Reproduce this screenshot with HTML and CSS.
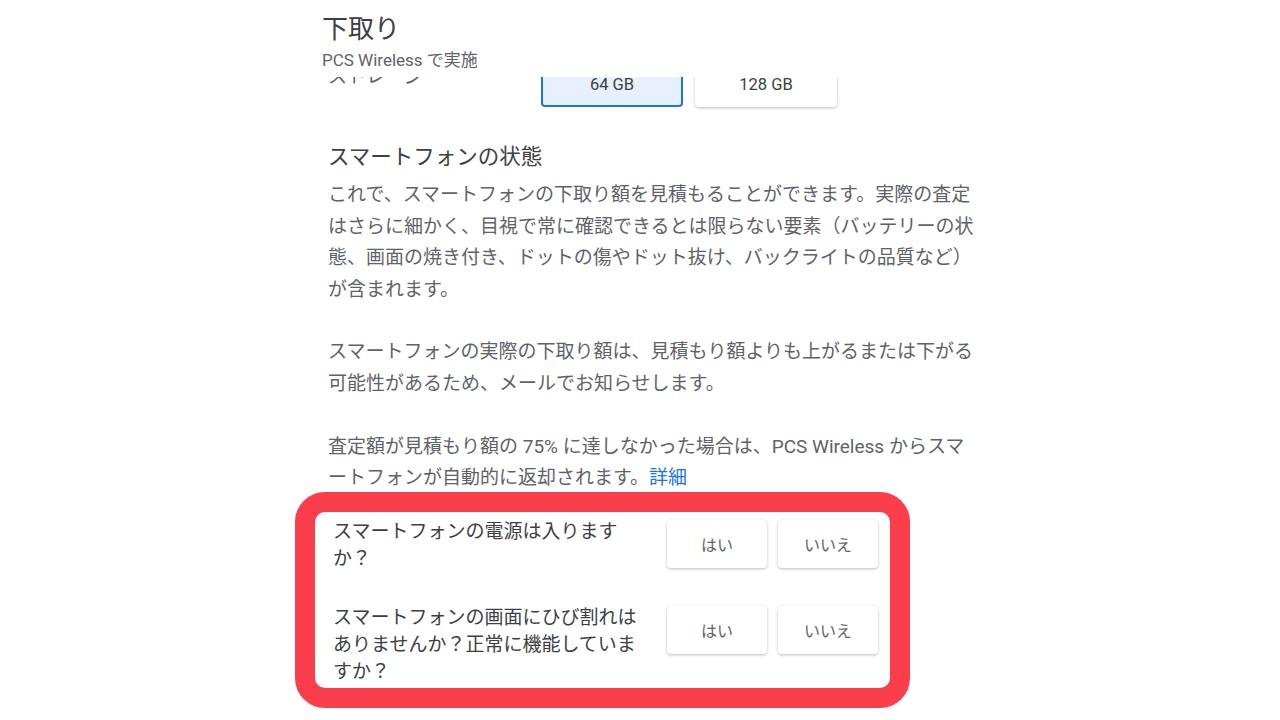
FILE: index.html
```html
<!DOCTYPE html>
<html lang="ja">
  <head>
    <meta charset="UTF-8" />
    <title>下取り</title>
    <link rel="stylesheet" href="styles.css">
  </head>
  <body>
    <header class="topbar">
      <h1 class="topbar-title">下取り</h1>
      <p class="topbar-sub">PCS Wireless で実施</p>
    </header>

    <main class="page">
      <section class="section">
        <div class="storage-row">
          <span class="storage-label">ストレージ</span>
          <div class="storage-options">
            <button class="option option-selected">64 GB</button>
            <button class="option">128 GB</button>
          </div>
        </div>

        <h2 class="section-title">スマートフォンの状態</h2>
        <p class="body-text">これで、スマートフォンの下取り額を見積もることができます。実際の査定はさらに細かく、目視で常に確認できるとは限らない要素（バッテリーの状態、画面の焼き付き、ドットの傷やドット抜け、バックライトの品質など）が含まれます。</p>
        <p class="body-text">スマートフォンの実際の下取り額は、見積もり額よりも上がるまたは下がる可能性があるため、メールでお知らせします。</p>
        <p class="body-text">査定額が見積もり額の 75% に達しなかった場合は、PCS Wireless からスマートフォンが自動的に返却されます。<a class="link" href="#">詳細</a></p>
      </section>

      <!-- highlighted questions -->
      <div class="highlight">
        <div class="question">
          <p class="question-text">スマートフォンの電源は入りますか？</p>
          <div class="answers">
            <button class="answer">はい</button>
            <button class="answer">いいえ</button>
          </div>
        </div>
        <div class="question">
          <p class="question-text">スマートフォンの画面にひび割れはありませんか？正常に機能していますか？</p>
          <div class="answers">
            <button class="answer">はい</button>
            <button class="answer">いいえ</button>
          </div>
        </div>
      </div>
    </main>
  </body>
</html>
```

FILE: styles.css
```css
body {
  margin: 0;
  background: #ffffff;
  font-family: Roboto, "Noto Sans CJK JP", sans-serif;
  color: #3c4043;
}
.topbar {
  position: fixed;
  top: 0;
  left: 0;
  right: 0;
  height: 77px;
  box-sizing: border-box;
  padding: 12px 0 0 322px;
  background: #ffffff;
  z-index: 1;
}
.topbar-title {
  margin: 0;
  font-size: 26px;
  line-height: 34px;
  font-weight: 400;
  color: #3c4043;
}
.topbar-sub {
  margin: 3px 0 0;
  font-size: 17px;
  line-height: 22px;
  color: #5f6368;
}
.page {
  padding: 61px 0 0 295px;
}
.section {
  padding-left: 33px;
  width: 650px;
}
.storage-row {
  display: flex;
  align-items: flex-start;
  height: 46px;
}
.storage-label {
  width: 213px;
  margin-top: 2px;
  font-size: 19px;
  line-height: 27px;
  color: #5f6368;
}
.storage-options {
  display: flex;
  gap: 12px;
}
.option {
  width: 142px;
  height: 46px;
  border: none;
  border-radius: 4px;
  background: #ffffff;
  box-shadow: 0 1px 3px rgba(60, 64, 67, 0.35);
  font-family: Roboto, "Noto Sans CJK JP", sans-serif;
  font-size: 16.5px;
  color: #3c4043;
}
.option-selected {
  background: #e8f0fe;
  border: 2px solid #1a73e8;
  box-shadow: none;
}
.section-title {
  margin: 35px 0 0;
  font-size: 21.5px;
  line-height: 30px;
  font-weight: 400;
  color: #3c4043;
}
.body-text {
  margin: 7px 0 0;
  font-size: 19px;
  line-height: 31.6px;
  color: #5f6368;
}
.body-text + .body-text {
  margin-top: 31px;
}
.link {
  color: #1a73e8;
  text-decoration: none;
}
.highlight {
  width: 615px;
  box-sizing: border-box;
  margin-top: -2px;
  border: 20px solid #fb3e4c;
  border-radius: 30px;
  padding: 6px 12px 2.5px 18px;
  background: #ffffff;
}
.question {
  display: flex;
  justify-content: space-between;
  align-items: flex-start;
}
.question + .question {
  margin-top: 32.5px;
}
.question-text {
  margin: 0;
  width: 310px;
  font-size: 19px;
  line-height: 27px;
  color: #3c4043;
}
.answers {
  display: flex;
  gap: 11px;
  margin-top: 2px;
}
.answer {
  width: 100px;
  height: 48px;
  border: none;
  border-radius: 4px;
  background: #ffffff;
  box-shadow: 0 1px 3px rgba(60, 64, 67, 0.35);
  font-family: Roboto, "Noto Sans CJK JP", sans-serif;
  font-size: 16px;
  color: #5f6368;
}
```
